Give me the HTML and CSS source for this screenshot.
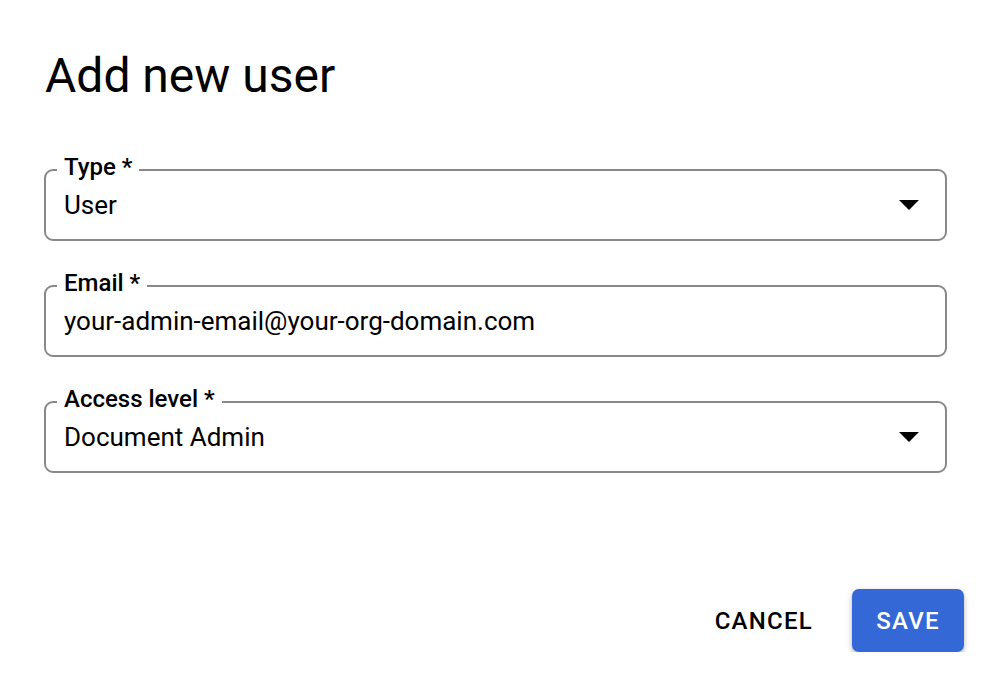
FILE: index.html
```html
<!DOCTYPE html>
<html lang="en">
<head>
    <meta charset="UTF-8">
    <meta name="viewport" content="width=device-width, initial-scale=1.0">
    <title>Add new user</title>
    <link rel="stylesheet" href="styles.css">
</head>
<body>
    <div class="dialog">
        <h1 class="title">Add new user</h1>

        <div class="fields">
            <fieldset class="field">
                <legend>Type *</legend>
                <div class="row">
                    <span class="value">User</span>
                    <svg class="arrow" width="20" height="10" viewBox="0 0 20 10"><path d="M0 0h20L10 10z"/></svg>
                </div>
            </fieldset>

            <fieldset class="field">
                <legend>Email *</legend>
                <div class="row">
                    <span class="value">your-admin-email@your-org-domain.com</span>
                </div>
            </fieldset>

            <fieldset class="field">
                <legend>Access level *</legend>
                <div class="row">
                    <span class="value">Document Admin</span>
                    <svg class="arrow" width="20" height="10" viewBox="0 0 20 10"><path d="M0 0h20L10 10z"/></svg>
                </div>
            </fieldset>
        </div>

        <div class="actions">
            <button class="btn btn-text">Cancel</button>
            <button class="btn btn-primary">Save</button>
        </div>
    </div>
</body>
</html>
```

FILE: styles.css
```css
body {
    margin: 0;
    padding: 0;
    background-color: #fff;
    color: #000;
    font-family: Roboto, "Liberation Sans", sans-serif;
}

.dialog {
    padding: 46px 0 0 0;
}

.title {
    margin: 0 45px;
    font-size: 48px;
    line-height: 60px;
    font-weight: 400;
}

.fields {
    display: flex;
    flex-direction: column;
    gap: 30px;
    margin: 49px 45px 0 44px;
}

.field {
    margin: 0;
    padding: 5px 8px 19px 18px;
    border: 2px solid #898989;
    border-radius: 9px;
    min-width: 0;
}

.field legend {
    margin-left: -7px;
    padding: 0 7px 6px 7px;
    font-size: 24px;
    line-height: 24px;
    font-weight: 500;
}

.row {
    display: flex;
    align-items: center;
    justify-content: space-between;
}

.value {
    font-size: 26px;
    line-height: 30px;
}

.arrow {
    margin-right: 18px;
    fill: #000;
}

.actions {
    display: flex;
    justify-content: flex-end;
    align-items: center;
    gap: 17px;
    margin-top: 116px;
    padding-right: 28px;
}

.btn {
    font-family: Roboto, "Liberation Sans", sans-serif;
    font-size: 24px;
    font-weight: 500;
    text-transform: uppercase;
    letter-spacing: 1.25px;
    border: none;
    border-radius: 7px;
    height: 63px;
    padding: 0 22px;
    cursor: pointer;
}

.btn-text {
    background: none;
    color: #000;
}

.btn-primary {
    background-color: #3468d6;
    color: #fff;
    min-width: 112px;
    box-shadow: 0 3px 4px rgba(0, 0, 0, 0.22), 0 1px 8px rgba(0, 0, 0, 0.1);
}
```
